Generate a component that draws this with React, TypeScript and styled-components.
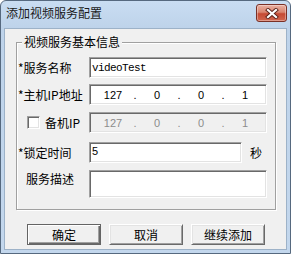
import React from 'react'
import styled, { createGlobalStyle } from 'styled-components'

const cjk = `"Noto Sans CJK SC", "Noto Sans", sans-serif`

const GlobalStyle = createGlobalStyle`
	body {
		margin: 0;
		background: #ffffff;
	}
`

const Window = styled.div`
	box-sizing: border-box;
	width: 291px;
	height: 254px;
	display: flex;
	flex-direction: column;
	border: 1px solid #56697f;
	border-radius: 6px 6px 0 0;
	background: linear-gradient(#c9ddf2, #bed3ea 27px, #c3d7ed);
	font-family: ${cjk};
	font-size: 12px;
	color: #000;
`

const TitleBar = styled.div`
	height: 27px;
	box-sizing: border-box;
	display: flex;
	align-items: center;
	justify-content: space-between;
	padding: 0 3px 3px 5px;
`

const Title = styled.span`
	line-height: 14px;
	color: #1a1a1a;
`

const CloseButton = styled.div`
	box-sizing: border-box;
	width: 31px;
	height: 18px;
	display: flex;
	align-items: center;
	justify-content: center;
	border: 1px solid #7a3026;
	border-radius: 3px;
	background: linear-gradient(#eab0a2, #d98670 45%, #c54a33 55%, #d1674f);
	box-shadow: inset 0 0 0 1px rgba(255, 255, 255, 0.35);
`

const Body = styled.div`
	flex: 1;
	margin: 0 3px 3px;
	display: flex;
	flex-direction: column;
	padding: 5px 0 0 11px;
	background: #f0f0f0;
	border: 1px solid #9db2c8;
`

const GroupBox = styled.fieldset`
	box-sizing: border-box;
	width: 260px;
	margin: 0;
	padding: 0 0 11px 1px;
	border: 1px solid #a0a0a0;
	box-shadow: inset 1px 1px 0 #ffffff, 1px 1px 0 #ffffff;
`

const Legend = styled.legend`
	margin-left: 4px;
	padding: 0 2px;
	line-height: 16px;
	background: #f0f0f0;
`

const Row = styled.div<{ $gap: number; $h?: number; $top?: boolean }>`
	display: flex;
	align-items: ${({ $top }) => ($top ? 'flex-start' : 'center')};
	margin-top: ${({ $gap }) => $gap}px;
	height: ${({ $h }) => $h ?? 21}px;
`

const Label = styled.label<{ $indent?: number; $pt?: number }>`
	box-sizing: border-box;
	width: 71px;
	display: flex;
	align-items: center;
	gap: 5px;
	padding-left: ${({ $indent }) => $indent ?? 0}px;
	padding-top: ${({ $pt }) => $pt ?? 0}px;
	line-height: 14px;
	white-space: nowrap;
`

const Field = styled.div<{ $w: number; $disabled?: boolean; $pl?: number }>`
	box-sizing: border-box;
	width: ${({ $w }) => $w}px;
	height: 100%;
	display: flex;
	align-items: center;
	padding-left: ${({ $pl }) => $pl ?? 1}px;
	background: ${({ $disabled }) => ($disabled ? '#f0f0f0' : '#ffffff')};
	color: ${({ $disabled }) => ($disabled ? '#8c8c8c' : '#000')};
	border: 1px solid;
	border-color: #a0a0a0 #ffffff #ffffff #a0a0a0;
	box-shadow: inset 1px 1px 0 #696969, inset -1px -1px 0 #e3e3e3;
`

const MonoText = styled.span`
	font-family: "Liberation Mono", monospace;
	font-size: 11px;
	letter-spacing: -0.6px;
	padding-left: 1px;
`

const NumText = styled.span`
	font-family: "Liberation Sans", Arial, sans-serif;
	font-size: 11px;
	margin-top: -3px;
	padding-left: 1px;
`

const IpSeg = styled.span`
	width: 38px;
	text-align: center;
	font-family: "Liberation Sans", Arial, sans-serif;
	font-size: 11px;
`

const IpDot = styled(IpSeg)`
	width: 6px;
`

const CheckBox = styled.span`
	box-sizing: border-box;
	width: 13px;
	height: 13px;
	background: #ffffff;
	border: 1px solid;
	border-color: #a0a0a0 #ffffff #ffffff #a0a0a0;
	box-shadow: inset 1px 1px 0 #696969, inset -1px -1px 0 #e3e3e3;
`

const Unit = styled.span`
	margin-left: 8px;
	line-height: 14px;
`

const ButtonRow = styled.div`
	display: flex;
	gap: 8px;
	margin-top: 14px;
	padding-left: 11px;
`

const Button = styled.button<{ $default?: boolean }>`
	box-sizing: border-box;
	width: 74px;
	height: 21px;
	margin: 0;
	padding: 0;
	font-family: ${cjk};
	font-size: 12px;
	line-height: 14px;
	color: #000;
	background: #f0f0f0;
	border: 1px solid;
	border-color: ${({ $default }) => ($default ? '#646464' : '#ffffff #696969 #696969 #ffffff')};
	box-shadow: ${({ $default }) =>
		$default
			? 'inset 1px 1px 0 #ffffff, inset -1px -1px 0 #696969, inset -2px -2px 0 #a0a0a0'
			: 'inset 1px 1px 0 #e3e3e3, inset -1px -1px 0 #a0a0a0'};
`

const CloseIcon = () => (
	<svg width="14" height="11" viewBox="0 0 14 11">
		<path d="M3 2 L11 9 M11 2 L3 9" stroke="#5a2118" strokeWidth="4" strokeLinecap="square" />
		<path d="M3 2 L11 9 M11 2 L3 9" stroke="#ffffff" strokeWidth="2.2" strokeLinecap="square" />
	</svg>
)

const IpField = ({ disabled }: { disabled?: boolean }) => (
	<Field $w={178} $pl={4} $disabled={disabled}>
		<IpSeg>127</IpSeg>
		<IpDot>.</IpDot>
		<IpSeg>0</IpSeg>
		<IpDot>.</IpDot>
		<IpSeg>0</IpSeg>
		<IpDot>.</IpDot>
		<IpSeg>1</IpSeg>
	</Field>
)

const App = () => (
	<>
		<GlobalStyle />
		<Window>
			<TitleBar>
				<Title>添加视频服务配置</Title>
				<CloseButton>
					<CloseIcon />
				</CloseButton>
			</TitleBar>
			<Body>
				<GroupBox>
					<Legend>视频服务基本信息</Legend>
					<Row $gap={7}>
						<Label>*服务名称</Label>
						<Field $w={178}>
							<MonoText>videoTest</MonoText>
						</Field>
					</Row>
					<Row $gap={6}>
						<Label>*主机IP地址</Label>
						<IpField />
					</Row>
					<Row $gap={7}>
						<Label $indent={9}>
							<CheckBox />
							备机IP
						</Label>
						<IpField disabled />
					</Row>
					<Row $gap={9}>
						<Label>*锁定时间</Label>
						<Field $w={153}>
							<NumText>5</NumText>
						</Field>
						<Unit>秒</Unit>
					</Row>
					<Row $gap={7} $h={28} $top>
						<Label $indent={8} $pt={2}>
							服务描述
						</Label>
						<Field $w={178} />
					</Row>
				</GroupBox>
				<ButtonRow>
					<Button $default>确定</Button>
					<Button>取消</Button>
					<Button>继续添加</Button>
				</ButtonRow>
			</Body>
		</Window>
	</>
)

export default App
